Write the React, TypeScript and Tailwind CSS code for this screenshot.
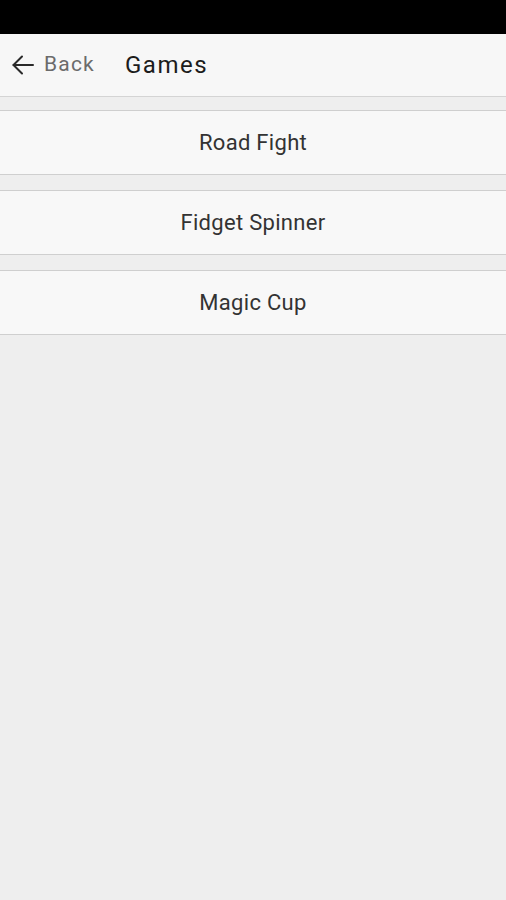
const games = ['Road Fight', 'Fidget Spinner', 'Magic Cup']

export default function App() {
  return (
    <div className="w-[506px] h-[900px] bg-[#eeeeee] flex flex-col" style={{ fontFamily: 'Roboto, "Noto Sans", sans-serif' }}>
      <div className="h-[34px] bg-black" />

      <header className="h-[63px] bg-[#f7f7f7] border-b border-[#d4d4d4] flex items-center">
        <button className="flex items-center w-[125px] pl-[11px] text-[21px] tracking-[1.2px] text-[#6b6b6b]">
          <svg width="24" height="22" viewBox="0 0 24 22" fill="none" stroke="#2a2a2a" strokeWidth="2" strokeLinecap="round" strokeLinejoin="round">
            <path d="M22 11H2.5" />
            <path d="M11 2.5L2.5 11L11 19.5" />
          </svg>
          <span className="ml-[9px]">Back</span>
        </button>
        <h1 className="text-[24px] tracking-[1.5px] text-[#1c1c1c] font-normal">Games</h1>
      </header>

      <div className="flex flex-col gap-[15px] pt-[13px]">
        {games.map((name) => (
          <button
            key={name}
            className="h-[65px] bg-[#f8f8f8] border-y border-[#cfcfcf] flex items-center justify-center text-[22px] tracking-[0.3px] text-[#333333]"
          >
            {name}
          </button>
        ))}
      </div>
    </div>
  )
}
